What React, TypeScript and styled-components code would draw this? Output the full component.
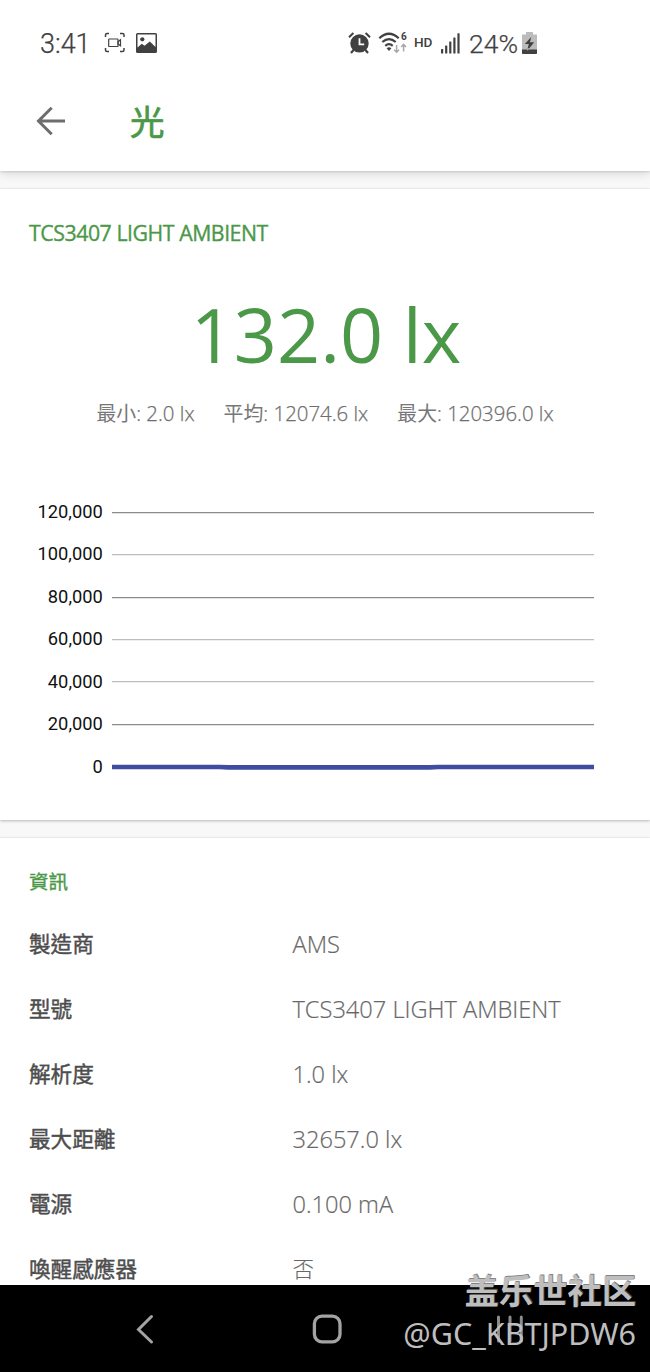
import React from 'react';
import styled, { createGlobalStyle } from 'styled-components';

const GREEN = '#4b9848';
const INK = '#414141';

const GlobalStyle = createGlobalStyle`
  * { box-sizing: border-box; }
  body {
    margin: 0;
    background: #fafafa;
    font-family: 'Open Sans', 'Noto Sans CJK TC', sans-serif;
  }
`;

const Screen = styled.div`
  position: relative;
  width: 650px;
  height: 1372px;
  display: flex;
  flex-direction: column;
  overflow: hidden;
  background: #f8f8f8;
`;

const Header = styled.header`
  position: relative;
  z-index: 1;
  flex: none;
  height: 171px;
  background: #fff;
  box-shadow: 0 1px 2px rgba(0, 0, 0, 0.12), 0 3px 9px rgba(0, 0, 0, 0.12);
`;

const StatusBar = styled.div`
  height: 86px;
  padding: 0 113px 0 40px;
  display: flex;
  align-items: center;
  justify-content: space-between;
  color: ${INK};
  font-family: Roboto, sans-serif;
`;

const StatusGroup = styled.div`
  display: flex;
  align-items: center;
`;

const StatusText = styled.span<{ $size: number; $width: number; $weight?: number }>`
  width: ${p => p.$width}px;
  padding-top: 1px;
  font-size: ${p => p.$size}px;
  font-weight: ${p => p.$weight ?? 300};
  line-height: 32px;
  white-space: nowrap;
  -webkit-text-stroke: 0.25px ${INK};
`;

const NetworkLabel = styled.span`
  width: 27px;
  padding-bottom: 2px;
  font-size: 13.6px;
  font-weight: 500;
  line-height: 20px;
  letter-spacing: -0.2px;
`;

const StatusIcon = styled.svg<{ $gap?: number }>`
  display: block;
  flex: none;
  margin-right: ${p => p.$gap ?? 0}px;
`;

const AppBar = styled.div`
  height: 85px;
  padding: 0 34px 15px;
  display: flex;
  align-items: center;
  gap: 64px;
`;

const AppTitle = styled.h1`
  margin: 0;
  padding-top: 1px;
  font-size: 34.5px;
  line-height: 44px;
  font-weight: 400;
  color: ${GREEN};
  -webkit-text-stroke: 0.7px ${GREEN};
`;

const Card = styled.section<{ $height: number; $top: number }>`
  flex: none;
  height: ${p => p.$height}px;
  margin-top: ${p => p.$top}px;
  background: #fff;
  box-shadow: 0 0 1px rgba(0, 0, 0, 0.12), 0 1px 3px rgba(0, 0, 0, 0.24);
`;

const CardTitle = styled.h2<{ $cjk?: boolean }>`
  margin: 0;
  padding: 29px 29px 0;
  font-size: ${p => (p.$cjk ? 19.5 : 21.3)}px;
  line-height: 30px;
  font-weight: 400;
  letter-spacing: ${p => (p.$cjk ? 0 : -0.46)}px;
  color: ${GREEN};
  -webkit-text-stroke: 0.35px ${GREEN};
`;

const Reading = styled.div`
  margin-top: 34px;
  padding-left: 2px;
  height: 104px;
  line-height: 104px;
  font-size: 75.5px;
  text-align: center;
  color: ${GREEN};
`;

const Stats = styled.div`
  margin-top: 12px;
  display: flex;
  justify-content: center;
  gap: 29px;
  font-size: 20.4px;
  font-weight: 300;
  line-height: 30px;
  color: #6e6e6e;
  white-space: nowrap;
`;

const StatName = styled.span`
  font-size: 19.9px;
  font-weight: 400;
  color: #777;
`;

const StatValue = styled.span`
  -webkit-text-stroke: 0.25px #6e6e6e;
`;

const Chart = styled.svg`
  display: block;
  margin-top: 60px;
  font-family: Roboto, sans-serif;
  font-size: 18.3px;
`;

const InfoList = styled.dl`
  margin: 0;
  padding: 14px 29px 0;
`;

const InfoRow = styled.div`
  display: grid;
  grid-template-columns: 263.5px 1fr;
  align-items: center;
  height: 65px;
`;

const Label = styled.dt`
  padding-top: 1px;
  font-size: 21.6px;
  line-height: 32px;
  color: #4d4d4d;
  font-weight: 400;
  -webkit-text-stroke: 0.45px #4d4d4d;
`;

const Value = styled.dd`
  margin: 0;
  font-size: 23.6px;
  line-height: 32px;
  font-weight: 300;
  color: #686868;
  white-space: nowrap;
  -webkit-text-stroke: 0.2px #686868;

  &:lang(zh) {
    font-size: 21.6px;
    -webkit-text-stroke-width: 0.1px;
  }
`;

const NavBar = styled.nav`
  position: absolute;
  left: 0;
  right: 0;
  bottom: 0;
  z-index: 2;
  height: 87px;
  padding: 0 126px;
  display: flex;
  align-items: center;
  justify-content: space-between;
  background: #000;
`;

const Watermark = styled.div`
  position: absolute;
  z-index: 3;
  right: 14px;
  bottom: 17px;
  display: flex;
  flex-direction: column;
  align-items: flex-end;
  color: #bebebe;
  white-space: nowrap;
`;

const Community = styled.span`
  font-family: 'Noto Sans CJK SC', sans-serif;
  font-size: 34.3px;
  line-height: 44px;
  font-weight: 700;
  text-shadow: 1px -1px 0 rgba(90, 90, 90, 0.75);
`;

const Account = styled.span`
  padding-top: 1px;
  font-family: 'Noto Sans', sans-serif;
  font-size: 30.5px;
  line-height: 43px;
  font-weight: 400;
`;

const ticks = [
  { label: '120,000', y: 23, color: '#8b8b8b' },
  { label: '100,000', y: 65.2, color: '#bdbdbd' },
  { label: '80,000', y: 108, color: '#8b8b8b' },
  { label: '60,000', y: 150.2, color: '#bdbdbd' },
  { label: '40,000', y: 192.9, color: '#bdbdbd' },
  { label: '20,000', y: 235.2, color: '#8b8b8b' },
  { label: '0', y: 278, color: '#8b8b8b' },
];

const stats = [
  ['最小', '2.0 lx'],
  ['平均', '12074.6 lx'],
  ['最大', '120396.0 lx'],
];

const info = [
  ['製造商', 'AMS'],
  ['型號', 'TCS3407 LIGHT AMBIENT'],
  ['解析度', '1.0 lx'],
  ['最大距離', '32657.0 lx'],
  ['電源', '0.100 mA'],
  ['喚醒感應器', '否'],
];

function RecordIcon() {
  return (
    <StatusIcon $gap={10} width="22" height="22" viewBox="0 0 22 22" fill="none" stroke={INK} strokeWidth="1.5">
      <path d="M1.500 5V3q0-1.500 1.500-1.500h2M16 1.500h2.500q1.500 0 1.500 1.500v2M20 16v2q0 1.500-1.500 1.500H16M5 19.500H3q-1.500 0-1.500-1.500v-2" />
      <rect x="4.700" y="7" width="9.300" height="7.500" rx=".6" strokeWidth="1.200" />
      <path d="M14 9.700l2.500-1.900v6L14 12z" strokeWidth="1.200" />
    </StatusIcon>
  );
}

function PictureIcon() {
  return (
    <StatusIcon width="22" height="20" viewBox="0 0 22 20">
      <path fillRule="evenodd" fill={INK} d="M1.500 0h18q1.500 0 1.500 1.500v17q0 1.500-1.500 1.500h-18Q0 20 0 18.500v-17Q0 0 1.500 0zM1.500 1.500v13l4.300-3.700 2.700 2 5.300-4.300 5.700 5.500V1.500z" />
      <circle cx="6.300" cy="6.300" r="2.100" fill={INK} />
    </StatusIcon>
  );
}

function AlarmIcon() {
  return (
    <StatusIcon $gap={7} width="23" height="22" viewBox="0 0 23 22" fill="none" stroke={INK}>
      <circle cx="11.500" cy="11.400" r="9.200" fill={INK} stroke="none" />
      <path d="M1 5.300L5.400 1M22 5.300L17.600 1" strokeWidth="2" />
      <path d="M5.500 18L3 21M17.500 18l2.500 3" strokeWidth="2.200" />
      <path d="M11.500 6.300v6h4.700" stroke="#fff" strokeWidth="1.800" />
    </StatusIcon>
  );
}

function WifiIcon() {
  return (
    <StatusIcon $gap={6} width="30" height="24" viewBox="0 0 30 24" fill="none" stroke={INK}>
      <path d="M1.300 7.200Q11 -1.700 20.700 7.200M4.300 11Q11 5.200 17.700 11M7.300 14.800Q11 11.600 14.700 14.800" strokeWidth="2.200" />
      <path d="M8.600 17.200Q11 15.500 13.400 17.200L11 20z" fill={INK} stroke="none" />
      <text x="23" y="9" fontFamily="Roboto, sans-serif" fontSize="10" fontWeight="700" fill={INK} stroke="none">6</text>
      <path d="M18.600 14v7M16.200 18.700l2.400 2.500 2.400-2.500M25.600 20.500v-7M23.200 15.900l2.400-2.500 2.400 2.500" stroke="#a8a8a8" strokeWidth="1.500" />
    </StatusIcon>
  );
}

function SignalIcon() {
  return (
    <StatusIcon $gap={9} width="19" height="21" viewBox="0 0 19 21" fill={INK}>
      <rect x="0" y="16" width="2.200" height="4.500" rx=".5" />
      <rect x="4.100" y="12.500" width="2.200" height="8" rx=".5" />
      <rect x="8.200" y="8.500" width="2.200" height="12" rx=".5" />
      <rect x="12.300" y="4.500" width="2.200" height="16" rx=".5" />
      <rect x="16.400" y="0.300" width="2.200" height="20.200" rx=".5" />
    </StatusIcon>
  );
}

function BatteryIcon() {
  return (
    <StatusIcon width="15" height="22" viewBox="0 0 15 22">
      <path d="M4 0h7v2.500h4V22H0V2.500h4z" fill="#bcbcbc" />
      <path d="M0 17.500h15V21q0 1-1 1H1q-1 0-1-1z" fill={INK} />
      <path d="M9.200 5L2.800 12h4L5 19l7.200-8.700H8z" fill={INK} />
      <path d="M5.800 16.500L5 19l2-2.400z" fill="#fff" />
    </StatusIcon>
  );
}

export default function App() {
  return (
    <>
      <GlobalStyle />
      <Screen>
        <Header>
          <StatusBar>
            <StatusGroup>
              <StatusText $size={27} $width={64}>3:41</StatusText>
              <RecordIcon />
              <PictureIcon />
            </StatusGroup>
            <StatusGroup>
              <AlarmIcon />
              <WifiIcon />
              <NetworkLabel>HD</NetworkLabel>
              <SignalIcon />
              <StatusText $size={26.5} $width={53}>24%</StatusText>
              <BatteryIcon />
            </StatusGroup>
          </StatusBar>
          <AppBar>
            <svg width="32" height="32" viewBox="0 0 32 32" fill="none" stroke="#6d6d6d" strokeWidth="3">
              <path d="M31 16H5M17.700 2.800L4.500 16l13.200 13.200" />
            </svg>
            <AppTitle>光</AppTitle>
          </AppBar>
        </Header>

        <Card $top={18} $height={631}>
          <CardTitle>TCS3407 LIGHT AMBIENT</CardTitle>
          <Reading>132.0 lx</Reading>
          <Stats>
            {stats.map(([name, value]) => (
              <span key={name}>
                <StatName>{name}</StatName>
                <StatValue>: {value}</StatValue>
              </span>
            ))}
          </Stats>
          <Chart width="650" height="300" viewBox="0 0 650 300">
            {ticks.map(t => (
              <g key={t.label}>
                <text x="102.800" y={t.y + 6} textAnchor="end" fill="#111">{t.label}</text>
                <path d={`M112 ${Math.floor(t.y) + 0.6}H594`} stroke={t.color} strokeWidth="1.200" />
              </g>
            ))}
            <path d="M112 278H220L228 278.400H430L438 278H594" fill="none" stroke="#3f4c9f" strokeWidth="4.600" />
          </Chart>
        </Card>

        <Card $top={18} $height={540}>
          <CardTitle $cjk>資訊</CardTitle>
          <InfoList>
            {info.map(([label, value]) => (
              <InfoRow key={label}>
                <Label>{label}</Label>
                <Value lang={value === '否' ? 'zh-Hant' : 'en'}>{value}</Value>
              </InfoRow>
            ))}
          </InfoList>
        </Card>

        <NavBar>
          <svg width="40" height="40" viewBox="0 0 40 40" fill="none" stroke="#a3a3a3" strokeWidth="3" strokeLinecap="round">
            <path d="M25.500 7.500L12.500 20.500l13 12.500" />
          </svg>
          <svg width="40" height="40" viewBox="0 0 40 40" fill="none" stroke="#a3a3a3" strokeWidth="3.300">
            <rect x="9.400" y="7.200" width="25.600" height="25.600" rx="7.500" />
          </svg>
          <svg width="40" height="40" viewBox="0 0 40 40" fill="none" stroke="#8c8c8c" strokeWidth="3" strokeLinecap="round">
            <path d="M14.500 8v24M26 8v24M37.300 8v24" />
          </svg>
        </NavBar>
        <Watermark>
          <Community>盖乐世社区</Community>
          <Account>@GC_KBTJPDW6</Account>
        </Watermark>
      </Screen>
    </>
  );
}
